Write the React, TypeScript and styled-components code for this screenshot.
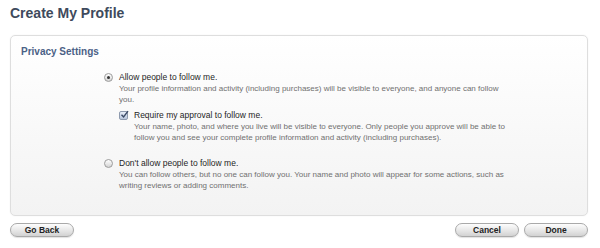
import React, { FC } from "react";
import styled, { createGlobalStyle } from "styled-components";

const GlobalStyle = createGlobalStyle`
  body {
    margin: 0;
    background: #ffffff;
    font-family: "Liberation Sans", Arial, sans-serif;
  }
`;

const Page = styled.div`
  width: 600px;
  height: 248px;
  padding: 0 12px 0 10px;
  box-sizing: border-box;
`;

const PageTitle = styled.h1`
  margin: 0;
  height: 35px;
  padding-top: 4px;
  box-sizing: border-box;
  font-size: 14px;
  line-height: 18px;
  font-weight: bold;
  color: #3e4a5c;
`;

const Panel = styled.div`
  height: 181px;
  box-sizing: border-box;
  border: 1px solid #dedede;
  border-radius: 5px;
  background: linear-gradient(#ffffff, #f3f3f3);
  box-shadow: 0 0 2px rgba(0, 0, 0, 0.06);
  padding: 9px 10px 0 10px;
`;

const PanelTitle = styled.h2`
  margin: 0 0 13px;
  font-size: 10px;
  line-height: 14px;
  font-weight: bold;
  color: #4b6186;
`;

const Options = styled.div`
  margin-left: 83px;
  width: 404px;
`;

const Option = styled.div<{ $gap?: number }>`
  display: grid;
  grid-template-columns: 15px 1fr;
  margin-top: ${(p) => p.$gap ?? 0}px;
`;

const Label = styled.div`
  font-size: 8.5px;
  line-height: 11px;
  color: #1e1e1e;
`;

const Desc = styled.div`
  font-size: 8px;
  line-height: 11px;
  color: #707070;
`;

const Radio = styled.span<{ $on?: boolean }>`
  width: 9px;
  height: 9px;
  margin-top: 1px;
  box-sizing: border-box;
  border-radius: 50%;
  border: 1px solid #9c9c9c;
  background: linear-gradient(#ffffff, #d4d4d4);
  display: flex;
  align-items: center;
  justify-content: center;
  &::after {
    content: "";
    width: 3px;
    height: 3px;
    border-radius: 50%;
    background: ${(p) => (p.$on ? "#333" : "transparent")};
  }
`;

const Check = styled.span`
  width: 9px;
  height: 9px;
  margin-top: 1px;
  box-sizing: border-box;
  border: 1px solid #8e9aae;
  border-radius: 2px;
  background: linear-gradient(#e8eef8, #b9c6dc);
  display: block;
  position: relative;
  svg {
    position: absolute;
    left: 0px;
    top: -2px;
  }
`;

const Footer = styled.div`
  display: flex;
  justify-content: space-between;
  margin-top: 7px;
`;

const ButtonGroup = styled.div`
  display: flex;
  gap: 5px;
`;

const Button = styled.button`
  width: 64px;
  height: 14px;
  padding: 0;
  border: 1px solid #a9a9a9;
  border-radius: 8px;
  background: linear-gradient(#fdfdfd, #e4e4e4 60%, #d2d2d2);
  box-shadow: 0 1px 1px rgba(0, 0, 0, 0.12);
  font-family: "Liberation Sans", Arial, sans-serif;
  font-size: 8.5px;
  font-weight: bold;
  line-height: 12px;
  color: #222;
`;

const Tick: FC = () => (
  <svg width="9" height="9" viewBox="0 0 9 9">
    <path d="M1.5 4.8 L3.6 7 L8 1.2" fill="none" stroke="#3b4a66" strokeWidth="1.4" />
  </svg>
);

const App: FC = () => {
  return (
    <>
      <GlobalStyle />
      <Page>
        <PageTitle>Create My Profile</PageTitle>
        <Panel>
          <PanelTitle>Privacy Settings</PanelTitle>
          <Options>
            <Option>
              <Radio $on />
              <div>
                <Label>Allow people to follow me.</Label>
                <Desc>
                  Your profile information and activity (including purchases) will be visible to everyone, and anyone can follow you.
                </Desc>
                <Option $gap={5}>
                  <Check>
                    <Tick />
                  </Check>
                  <div>
                    <Label>Require my approval to follow me.</Label>
                    <Desc>
                      Your name, photo, and where you live will be visible to everyone. Only people you approve will be able to follow you and see your complete profile information and activity (including purchases).
                    </Desc>
                  </div>
                </Option>
              </div>
            </Option>
            <Option $gap={15}>
              <Radio />
              <div>
                <Label>Don't allow people to follow me.</Label>
                <Desc>
                  You can follow others, but no one can follow you. Your name and photo will appear for some actions, such as writing reviews or adding comments.
                </Desc>
              </div>
            </Option>
          </Options>
        </Panel>
        <Footer>
          <Button>Go Back</Button>
          <ButtonGroup>
            <Button>Cancel</Button>
            <Button>Done</Button>
          </ButtonGroup>
        </Footer>
      </Page>
    </>
  );
};

export default App;
